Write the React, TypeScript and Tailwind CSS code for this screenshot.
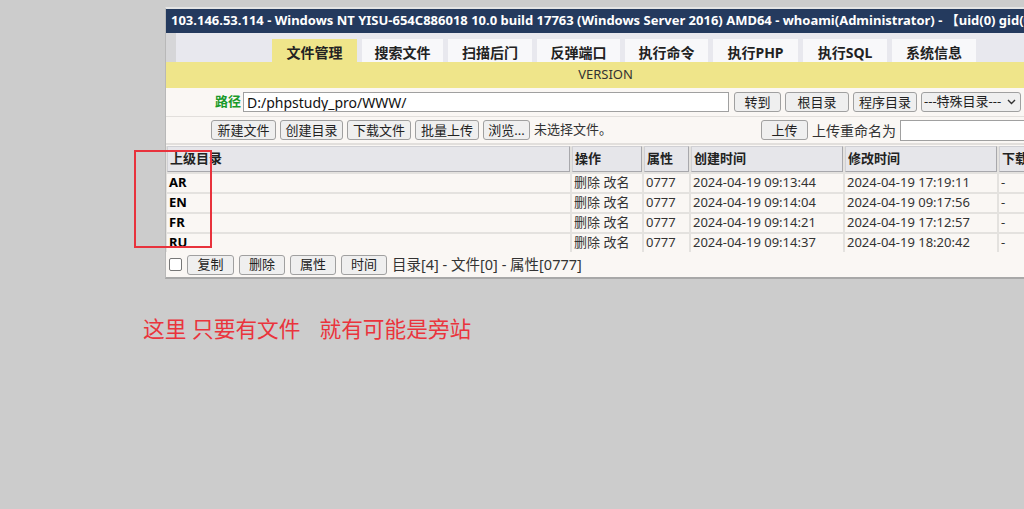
const FONT = "font-['Noto_Sans','Noto_Sans_CJK_SC',sans-serif]";

const TABS = [
  { label: "文件管理", w: "w-[85px]" },
  { label: "搜索文件", w: "w-[81px]" },
  { label: "扫描后门", w: "w-[84px]" },
  { label: "反弹端口", w: "w-[83px]" },
  { label: "执行命令", w: "w-[83px]" },
  { label: "执行PHP", w: "w-[85px]" },
  { label: "执行SQL", w: "w-[84px]" },
  { label: "系统信息", w: "w-[84px]" },
];

const ROWS = [
  { name: "AR", created: "2024-04-19 09:13:44", modified: "2024-04-19 17:19:11" },
  { name: "EN", created: "2024-04-19 09:14:04", modified: "2024-04-19 09:17:56" },
  { name: "FR", created: "2024-04-19 09:14:21", modified: "2024-04-19 17:12:57" },
  { name: "RU", created: "2024-04-19 09:14:37", modified: "2024-04-19 18:20:42" },
];

function Btn({ children, w }: { children: React.ReactNode; w: string }) {
  return (
    <button
      type="button"
      className={`${w} h-[20px] shrink-0 rounded-[3px] border border-[#a0a0a0] bg-[#efefef] text-[13px] leading-none text-[#222]`}
    >
      {children}
    </button>
  );
}

const COLS = "grid-cols-[403px_70px_45px_152px_152px_40px]";
const headCell =
  "h-[26px] flex items-center px-[2px] bg-[#e6e6ea] border border-[#d0d0d4] border-r-[#a8a8ac] border-b-[#a8a8ac] text-[13px] font-bold text-[#222]";
const cell = "h-[18px] flex items-center px-[2px] bg-[#faf7f4] text-[13px] text-[#333]";

export default function App() {
  return (
    <div className={`${FONT} relative h-[509px] w-[1024px] overflow-hidden bg-[#cccccc]`}>
      <div className="pl-[165px] pt-[7px]">
        <div className="w-[880px] border-t-2 border-l border-b-2 border-[#e4e4e4] border-l-[#b8b8b8] border-b-[#a8a8a8] bg-[#faf7f4]">
          {/* title */}
          <div className="flex h-[24px] items-center whitespace-nowrap bg-[#243a5e] pl-[5px] text-[13px] font-bold text-white">
            103.146.53.114 - Windows NT YISU-654C886018 10.0 build 17763 (Windows Server 2016) AMD64 - whoami(Administrator) - 【uid(0) gid(0)】
          </div>

          {/* tabs */}
          <div className="flex h-[29px] bg-[#e8e8ee]">
            <div className="w-[10px] bg-[#d6d6d8]" />
            <div className="flex items-end gap-[5px] pl-[96px]">
              {TABS.map((t, i) => (
                <div
                  key={t.label}
                  className={`flex h-[23px] justify-center pt-[5px] text-[14px] font-bold leading-[18px] text-[#222] ${t.w} ${
                    i === 0 ? "bg-[#efe58a]" : "bg-[#f8f8fa]"
                  }`}
                >
                  {t.label}
                </div>
              ))}
            </div>
          </div>

          {/* version */}
          <div className="flex h-[26px] items-center justify-center bg-[#efe58a] text-[13px] text-[#333]">
            VERSION
          </div>

          {/* path row */}
          <div className="flex h-[29px] items-center border-b border-[#e2dfdc] pl-[49px]">
            <span className="mr-[2px] text-[13px] font-bold text-[#1a9a2a]">路径</span>
            <input
              readOnly
              value="D:/phpstudy_pro/WWW/"
              className="h-[20px] w-[486px] border border-[#a0a0a0] bg-white px-[3px] text-[14px] text-[#111] outline-none"
            />
            <div className="ml-[5px] flex gap-[4px]">
              <Btn w="w-[47px]">转到</Btn>
              <Btn w="w-[64px]">根目录</Btn>
              <Btn w="w-[64px]">程序目录</Btn>
              <div className="flex h-[20px] w-[100px] items-center justify-between rounded-[3px] border border-[#a0a0a0] bg-[#efefef] pl-[2px] pr-[4px] text-[13px] text-[#222]">
                <span>---特殊目录---</span>
                <svg width="9" height="6" viewBox="0 0 9 6" fill="none" stroke="#333" strokeWidth="1.4">
                  <path d="M1 1l3.5 3.5L8 1" />
                </svg>
              </div>
            </div>
          </div>

          {/* upload row */}
          <div className="flex h-[28px] items-center border-b-2 border-[#e2dfdc] pl-[45px]">
            <div className="flex items-center gap-[4px]">
              <Btn w="w-[65px]">新建文件</Btn>
              <Btn w="w-[63px]">创建目录</Btn>
              <Btn w="w-[64px]">下载文件</Btn>
              <Btn w="w-[64px]">批量上传</Btn>
              <Btn w="w-[47px]">浏览...</Btn>
              <span className="text-[13px] text-[#333]">未选择文件。</span>
            </div>
            <div className="ml-[149px] flex items-center gap-[4px]">
              <Btn w="w-[47px]">上传</Btn>
              <span className="text-[14px] text-[#333]">上传重命名为</span>
              <input
                readOnly
                className="h-[21px] w-[130px] border border-[#a0a0a0] bg-white outline-none"
              />
            </div>
          </div>

          {/* table */}
          <div className={`mt-[1px] grid ${COLS} gap-[2px] bg-[#e4e2df] pl-[1px]`}>
            <div className={headCell}>上级目录</div>
            <div className={headCell}>操作</div>
            <div className={headCell}>属性</div>
            <div className={headCell}>创建时间</div>
            <div className={headCell}>修改时间</div>
            <div className={headCell}>下载</div>
            {ROWS.map((r) => (
              <div key={r.name} className="contents">
                <div className={`${cell} font-bold text-black`}>{r.name}</div>
                <div className={`${cell} text-[#222]`}>删除 改名</div>
                <div className={`${cell} text-[#111]`}>0777</div>
                <div className={cell}>{r.created}</div>
                <div className={cell}>{r.modified}</div>
                <div className={cell}>-</div>
              </div>
            ))}
          </div>

          {/* footer */}
          <div className="flex h-[25px] items-center gap-[5px] pl-[3px]">
            <span className="h-[13px] w-[13px] rounded-[2px] border border-[#777] bg-white" />
            <div className="flex gap-[5px]">
              <Btn w="w-[47px]">复制</Btn>
              <Btn w="w-[46px]">删除</Btn>
              <Btn w="w-[46px]">属性</Btn>
              <Btn w="w-[46px]">时间</Btn>
            </div>
            <span className="text-[14.5px] text-[#333]">目录[4] - 文件[0] - 属性[0777]</span>
          </div>
        </div>
      </div>

      {/* annotation */}
      <div className="absolute left-[134px] top-[150px] h-[98px] w-[78px] border-2 border-[#e8323c]" />
      <div className="flex whitespace-pre pl-[143px] pt-[34px] text-[21.7px] text-[#ea343c]">
        <span>这里 只要有文件</span>
        <span className="ml-[19px]">就有可能是旁站</span>
      </div>
    </div>
  );
}
